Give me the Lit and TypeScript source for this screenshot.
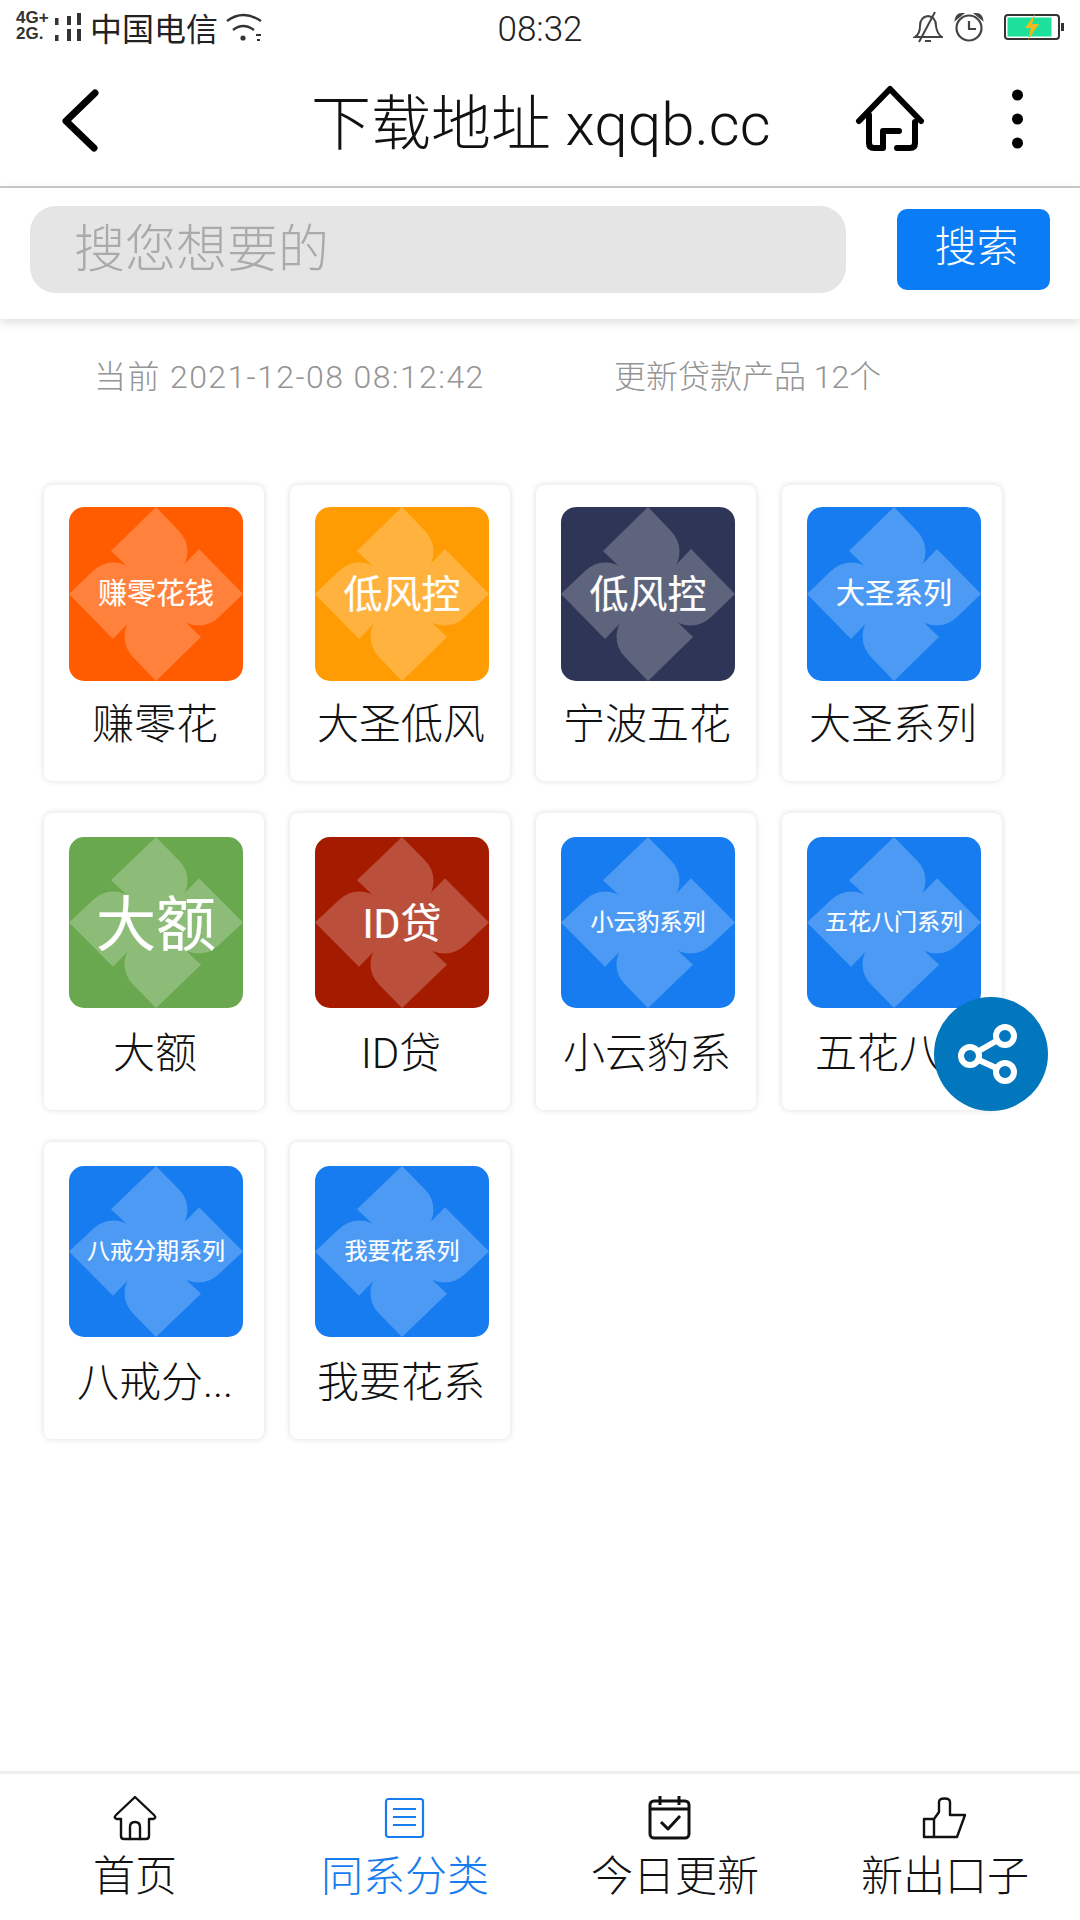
import { LitElement, html, css, svg } from "lit";
import { customElement } from "lit/decorators.js";

type Tile = { name: string; art: string; bg: string; size: number; short?: boolean };

const tiles: Tile[] = [
  { name: "赚零花", art: "赚零花钱", bg: "#ff5c00", size: 29 },
  { name: "大圣低风", art: "低风控", bg: "#ff9c05", size: 39 },
  { name: "宁波五花", art: "低风控", bg: "#2f3657", size: 39 },
  { name: "大圣系列", art: "大圣系列", bg: "#177cf0", size: 29 },
  { name: "大额", art: "大额", bg: "#6aa84f", size: 60, short: true },
  { name: "ID贷", art: "ID贷", bg: "#a61c00", size: 41, short: true },
  { name: "小云豹系", art: "小云豹系列", bg: "#177cf0", size: 23, short: true },
  { name: "五花八...", art: "五花八门系列", bg: "#177cf0", size: 23, short: true },
  { name: "八戒分...", art: "八戒分期系列", bg: "#177cf0", size: 23, short: true },
  { name: "我要花系", art: "我要花系列", bg: "#177cf0", size: 23, short: true },
];

const petal = "M87 0L110 24A29 29 0 0 1 110 65L87 87L42 44Z";

const flower = svg`
  <g opacity=".23" fill="#fff">
    <path d=${petal} />
    <path d=${petal} transform="rotate(90 87 87)" />
    <path d=${petal} transform="rotate(180 87 87)" />
    <path d=${petal} transform="rotate(270 87 87)" />
  </g>
`;

@customElement("app-root")
export class AppRoot extends LitElement {
  static styles = css`
    * {
      box-sizing: border-box;
    }

    :host {
      display: flex;
      flex-direction: column;
      position: relative;
      height: 1920px;
      background: #fff;
      color: #111;
      font-family: Roboto, "Noto Sans CJK SC", sans-serif;
      font-weight: 300;
    }

    svg {
      display: block;
    }

    .status {
      display: grid;
      grid-template-columns: 1fr auto 1fr;
      align-items: center;
      height: 52px;
      padding: 6px 16px 0;
      color: #222;
    }

    .status-left {
      display: flex;
      align-items: center;
    }

    .net {
      display: flex;
      flex-direction: column;
      width: 34px;
      margin-top: -6px;
      font: 700 17px/16px "Liberation Sans", sans-serif;
      color: #333;
    }

    .carrier {
      margin: -4px 7px 0 8px;
      font-size: 32px;
      font-weight: 400;
    }

    .wifi {
      margin-top: -4px;
    }

    .time {
      font-size: 35px;
    }

    .status-right {
      display: flex;
      justify-content: flex-end;
      align-items: center;
      margin-top: -5px;
    }

    .alarm {
      margin: 0 20px 0 11px;
    }

    .header {
      display: flex;
      align-items: center;
      height: 136px;
      padding-right: 57px;
      border-bottom: 2px solid #ccc;
    }

    .back {
      margin-left: 59px;
    }

    .title {
      margin-left: 208px;
      padding-bottom: 2px;
      font-size: 60px;
      white-space: nowrap;
    }

    .home {
      margin: 0 87px 0 auto;
    }

    .search {
      display: flex;
      align-items: center;
      justify-content: space-between;
      height: 131px;
      padding: 0 30px 8px;
      box-shadow: 0 3px 10px rgba(0, 0, 0, 0.14);
    }

    .field {
      width: 816px;
      height: 87px;
      padding-left: 44px;
      border-radius: 26px;
      background: #e5e5e5;
      color: #aaa;
      font-size: 51px;
      line-height: 88px;
    }

    .go {
      width: 153px;
      height: 81px;
      padding-left: 6px;
      border-radius: 10px;
      background: #0a7cf5;
      color: #fff;
      font-size: 42px;
      line-height: 78px;
      text-align: center;
    }

    .info {
      display: flex;
      padding: 36px 0 0 94px;
      color: #949494;
      font-size: 32px;
      line-height: 44px;
    }

    .stamp {
      width: 520px;
      letter-spacing: 1.4px;
    }

    .grid {
      display: grid;
      grid-template-columns: repeat(4, 220px);
      column-gap: 26px;
      row-gap: 32px;
      padding: 86px 0 0 44px;
    }

    .card {
      display: flex;
      flex-direction: column;
      align-items: center;
      height: 296px;
      padding-top: 22px;
      border-radius: 8px;
      background: #fff;
      box-shadow: 0 0 6px rgba(0, 0, 0, 0.14);
    }

    .card.short {
      height: 297px;
      padding-top: 24px;
    }

    .tile {
      position: relative;
      display: flex;
      align-items: center;
      justify-content: center;
      width: 174px;
      height: 174px;
      margin-left: 4px;
      border-radius: 15px;
      overflow: hidden;
      color: #fff;
      font-weight: 400;
      white-space: nowrap;
    }

    .card.short .tile {
      height: 171px;
    }

    .tile svg {
      position: absolute;
      inset: 0;
      width: 100%;
      height: 100%;
    }

    .tile span {
      position: relative;
      padding-bottom: 6px;
      -webkit-text-stroke: 0.2px #fff;
    }

    .name {
      margin: 19px 0 0 2px;
      font-size: 42px;
      line-height: 50px;
      white-space: nowrap;
    }

    .card.short .name {
      margin-top: 21px;
    }

    .tabs {
      display: grid;
      grid-template-columns: repeat(4, 1fr);
      height: 149px;
      margin-top: auto;
      border-top: 3px solid #eee;
    }

    .tab {
      display: flex;
      flex-direction: column;
      align-items: center;
      height: 100%;
      padding-top: 20px;
      font-size: 42px;
      line-height: 50px;
      color: #111;
    }

    .tab.on {
      color: #177cf0;
    }

    .tab svg {
      width: 48px;
      height: 48px;
      margin-bottom: 10px;
    }

    .tab.shift svg {
      margin-right: 11px;
    }

    .fab {
      position: absolute;
      left: 934px;
      top: 997px;
      display: flex;
      align-items: center;
      justify-content: center;
      width: 114px;
      height: 114px;
      border-radius: 50%;
      background: #0277bd;
    }
  `;

  render() {
    return html`
      <div class="status">
        <div class="status-left">
          <div class="net"><span>4G+</span><span>2G.</span></div>
          <svg width="32" height="32" viewBox="0 0 32 32" fill="#333">
            <rect x="5" y="5" width="3.500" height="7" /><rect x="5" y="22" width="3.500" height="6" />
            <rect x="17" y="3" width="4" height="9" /><rect x="17" y="16" width="4" height="12" />
            <rect x="27" y="0" width="4" height="12" /><rect x="27" y="16" width="4" height="12" />
          </svg>
          <span class="carrier">中国电信</span>
          <svg class="wifi" width="38" height="30" viewBox="0 0 38 30" fill="none" stroke="#333" stroke-width="2.400">
            <path d="M2 9Q18-3 36 9" />
            <path d="M8 18Q18 10 29 18" />
            <circle cx="18" cy="26" r="2.600" fill="#333" stroke="none" />
            <path d="M31 23h5M32 28h3" stroke-width="2" />
          </svg>
        </div>
        <div class="time">08:32</div>
        <div class="status-right">
          <svg width="30" height="32" viewBox="0 0 30 32" fill="none" stroke="#444" stroke-width="2">
            <path d="M2 26Q7 23 7 15Q7 6 15 5Q23 6 23 15Q24 23 29 26Z" />
            <path d="M22 1L6 31" />
            <path d="M12 30h6" />
          </svg>
          <svg class="alarm" width="30" height="30" viewBox="0 0 30 30" fill="none" stroke="#444" stroke-width="2.200">
            <circle cx="15" cy="16" r="12.500" />
            <path d="M15 9v8h7" />
            <path d="M2 7Q3 2 8 2ZM28 7Q27 2 22 2Z" fill="#444" />
          </svg>
          <svg width="60" height="26" viewBox="0 0 60 26">
            <rect x="1" y="1" width="54" height="24" rx="3" fill="#fff" stroke="#333" stroke-width="2" />
            <rect x="3.500" y="3.500" width="44" height="19" fill="#1de09b" />
            <rect x="57" y="9" width="3" height="8" fill="#333" />
            <path d="M31 0L21 14H27L24 26L35 10H28Z" fill="#f5b81c" />
          </svg>
        </div>
      </div>

      <div class="header">
        <svg class="back" width="44" height="68" viewBox="0 0 44 68" fill="none" stroke="#000" stroke-width="7" stroke-linecap="round" stroke-linejoin="round">
          <path d="M36 8L7 36L35 63" />
        </svg>
        <div class="title">下载地址 xqqb.cc</div>
        <svg class="home" width="70" height="68" viewBox="0 0 70 68" fill="none" stroke="#000" stroke-width="6" stroke-linecap="round" stroke-linejoin="round">
          <path d="M4 36L35 4L66 36" />
          <path d="M14 30V58Q14 63 19 63H28V46H44" />
          <path d="M60 37V58Q60 63 55 63H42" />
        </svg>
        <svg width="11" height="60" viewBox="0 0 11 60" fill="#000">
          <circle cx="5.500" cy="6" r="5.500" /><circle cx="5.500" cy="30" r="5.500" /><circle cx="5.500" cy="54" r="5.500" />
        </svg>
      </div>

      <div class="search">
        <div class="field">搜您想要的</div>
        <div class="go">搜索</div>
      </div>

      <div class="info">
        <span class="stamp">当前 2021-12-08 08:12:42</span>
        <span>更新贷款产品 12个</span>
      </div>

      <div class="grid">
        ${tiles.map(
          (t) => html`
            <div class="card ${t.short ? "short" : ""}">
              <div class="tile" style="background:${t.bg};font-size:${t.size}px">
                <svg viewBox="0 0 174 174" preserveAspectRatio="none">${flower}</svg>
                <span>${t.art}</span>
              </div>
              <div class="name">${t.name}</div>
            </div>
          `
        )}
      </div>

      <div class="tabs">
        <div class="tab">
          <svg viewBox="0 0 48 48" fill="none" stroke="currentColor" stroke-width="2.400" stroke-linejoin="round" stroke-linecap="round">
            <path d="M24 3L5 21Q2 24 6 25H10V42Q10 45 13 45H35Q38 45 38 42V25H42Q46 24 43 21Z" />
            <path d="M19 45V33Q19 28 24 28Q29 28 29 33V45" />
          </svg>
          首页
        </div>
        <div class="tab on">
          <svg viewBox="0 0 48 48" fill="none" stroke="currentColor" stroke-width="2.200">
            <rect x="5" y="5" width="37" height="38" rx="2.500" />
            <path d="M12 15H35M12 23H35M12 31H35" />
          </svg>
          同系分类
        </div>
        <div class="tab shift">
          <svg viewBox="0 0 48 48" fill="none" stroke="currentColor" stroke-width="3" stroke-linejoin="round">
            <rect x="4" y="7" width="39" height="37" rx="4" />
            <path d="M14 2V11M33 2V11M4 15H43" />
            <path d="M15 28L22 35L34 22" />
          </svg>
          今日更新
        </div>
        <div class="tab">
          <svg viewBox="0 0 48 48" fill="none" stroke="currentColor" stroke-width="2.400" stroke-linejoin="round">
            <path d="M13 25L18 18V8Q18 4.500 23.500 4.500Q29 4.500 29 8V21H44L36 43H3V25H13V43" />
          </svg>
          新出口子
        </div>
      </div>

      <div class="fab">
        <svg width="72" height="72" viewBox="0 0 72 72" fill="none" stroke="#fff" stroke-width="6">
          <path d="M15 38L50 18M15 38L50 54" />
          <circle cx="50" cy="18" r="9" fill="#0277bd" />
          <circle cx="15" cy="38" r="9" fill="#0277bd" />
          <circle cx="50" cy="54" r="9" fill="#0277bd" />
        </svg>
      </div>
    `;
  }
}
